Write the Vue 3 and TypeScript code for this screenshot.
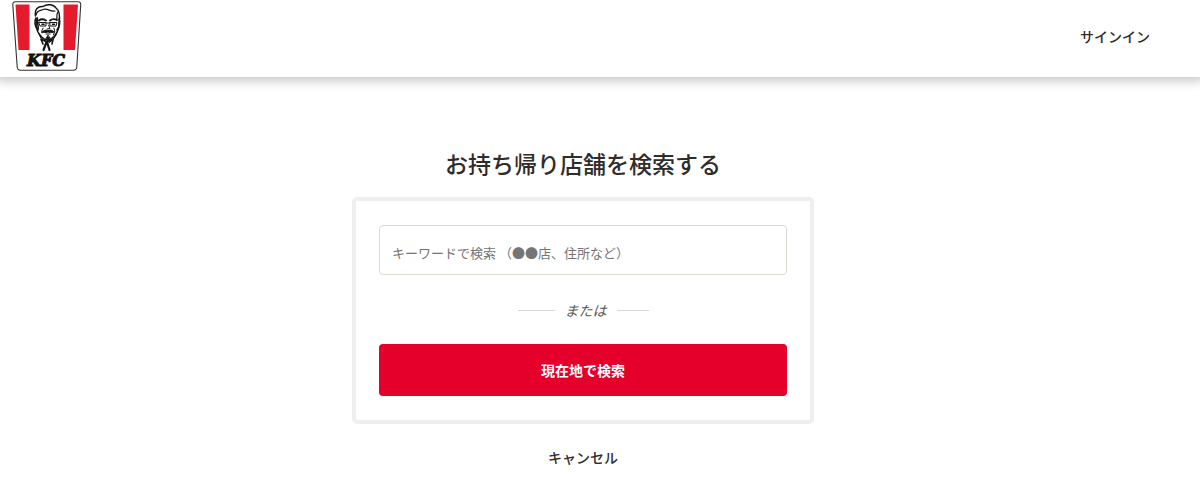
<script setup lang="ts">
import { ref } from 'vue'

const keyword = ref<string>('')
</script>

<template>
  <div class="page">
    <header class="header">
      <a class="logo" href="#" aria-label="KFC">
        <svg width="70" height="70" viewBox="0 0 70 70">
          <path d="M3.5 .8H66Q69 .8 68.700 4L64.800 66Q64.500 69.200 61.500 69.200H8.500Q5.500 69.200 5.200 66L.8 4Q.5 .8 3.500 .8Z" fill="#fff" stroke="#333" stroke-width="1.1" />
          <path d="M3.500 3.500H17.500V49H6.500Z" fill="#e31b2d" />
          <path d="M51.500 3.500H66L63 49H51.500Z" fill="#e31b2d" />
          <g fill="none" stroke="#151515" stroke-linecap="round" stroke-linejoin="round">
            <path d="M23.500 15C22.500 8 26 5 31 5.500C35 2.500 42 3.500 44 7C47.500 9.500 48 16 47 22C47.500 28 44 35 39 38C35 40.500 31 38 28 34C24.500 30 23.500 24 24.500 19" stroke-width="1.5" />
            <path d="M24 14C25 9 28 10 31 8.500C36 7 38 11 43 10M46 11C44 13 45.500 17 44.500 19" stroke-width="1.2" />
            <path d="M24 17C22 20 23 26 25.500 28M25.500 17C24.500 20 27 24 26 29M47 18C48.500 20 47.500 26 45 29" stroke-width="1.6" />
            <path d="M27 19.500Q30 17 34 19.500M38 19.500Q41 17 45 19" stroke-width="1.9" />
            <path d="M27 21.500H34V25H28.500ZM38 21.500H45L44 25H38.500ZM34 22H38" stroke-width="1" />
            <path d="M30 23.200H32M40.500 23.200H42.500" stroke-width="1.6" />
            <path d="M36.500 24L38 27.500L35 28M31 27Q29 30 30 32M42 27Q44 30 41.500 34" stroke-width="1" />
            <path d="M30 31Q33 28 36 29.500Q39 28 42.500 31Q38 32 36 31Q33 32 30 31Z" fill="#151515" stroke-width="1" />
            <path d="M34 33H38" stroke-width="1" />
            <path d="M35.800 34.500L34 37.500L35.500 40L38 37.500Z" fill="#151515" stroke-width="1" />
            <path d="M26.500 32L29.500 38L35 41.500M44.500 33L41 38.500L37 41.500" stroke-width="1.2" />
            <path d="M34.500 40.500L29 38.500L31 43M35.500 40.500L41 38.500L40 43" stroke-width="1.6" />
            <path d="M34.500 41L31.500 49M35 41L37.500 49" stroke-width="2.2" />
          </g>
          <text x="34" y="65" text-anchor="middle" class="wordmark">KFC</text>
        </svg>
      </a>
      <button type="button" class="link-button">サインイン</button>
    </header>

    <main class="main">
      <h1 class="title">お持ち帰り店舗を検索する</h1>
      <form class="card" @submit.prevent>
        <input
          v-model="keyword"
          class="field"
          type="text"
          aria-label="キーワードで検索"
          placeholder="キーワードで検索 （●●店、住所など）"
        />
        <div class="divider"><span>または</span></div>
        <button type="button" class="primary">現在地で検索</button>
      </form>
      <button type="button" class="link-button">キャンセル</button>
    </main>
  </div>
</template>

<style>
body {
  margin: 0;
  background: #fff;
}
</style>

<style scoped>
.page {
  color: #302c29;
  font-family: "Noto Sans CJK JP", sans-serif;
  font-size: 14px;
  line-height: 20px;
}

.page * {
  box-sizing: border-box;
}

.header {
  display: flex;
  align-items: center;
  justify-content: space-between;
  height: 77px;
  padding: 0 50px 5px 12px;
  background: #fff;
  box-shadow: 0 0 10px 4px rgba(0, 0, 0, 0.22);
}

.logo,
.logo svg {
  display: block;
}

.wordmark {
  fill: #111;
  stroke: #111;
  stroke-width: 1px;
  font-family: "DejaVu Serif", serif;
  font-size: 16px;
  font-style: italic;
  font-weight: 700;
}

.link-button {
  padding: 0;
  border: 0;
  background: none;
  color: inherit;
  font: inherit;
  font-weight: 500;
  cursor: pointer;
}

.main {
  display: flex;
  flex-direction: column;
  align-items: center;
  padding: 70px 34px 20px 0;
}

.title {
  margin: 0 0 18px;
  font-size: 23px;
  font-weight: 500;
  line-height: 32px;
}

.card {
  display: flex;
  flex-direction: column;
  width: 100%;
  max-width: 462px;
  margin-bottom: 23px;
  padding: 24px 23px;
  border: 4px solid #efefef;
  border-radius: 5px;
}

.field {
  width: 100%;
  height: 50px;
  padding: 4px 12px 0;
  border: 1px solid #dcd9d3;
  border-radius: 4px;
  background: #fff;
  color: inherit;
  font-family: inherit;
  font-size: 13px;
}

.field::placeholder {
  color: #757575;
  opacity: 1;
}

.divider {
  display: flex;
  align-items: center;
  justify-content: center;
  gap: 10px;
  margin: 25px 0 24px;
  color: #5c5955;
  font-style: italic;
}

.divider::before,
.divider::after {
  width: 37px;
  height: 1px;
  background: #d8d8d8;
  content: "";
}

.divider::after {
  width: 32px;
}

.primary {
  height: 52px;
  padding: 0;
  border: 0;
  border-radius: 4px;
  background: #e4002b;
  color: #fff;
  font: inherit;
  font-weight: 700;
  cursor: pointer;
}
</style>
